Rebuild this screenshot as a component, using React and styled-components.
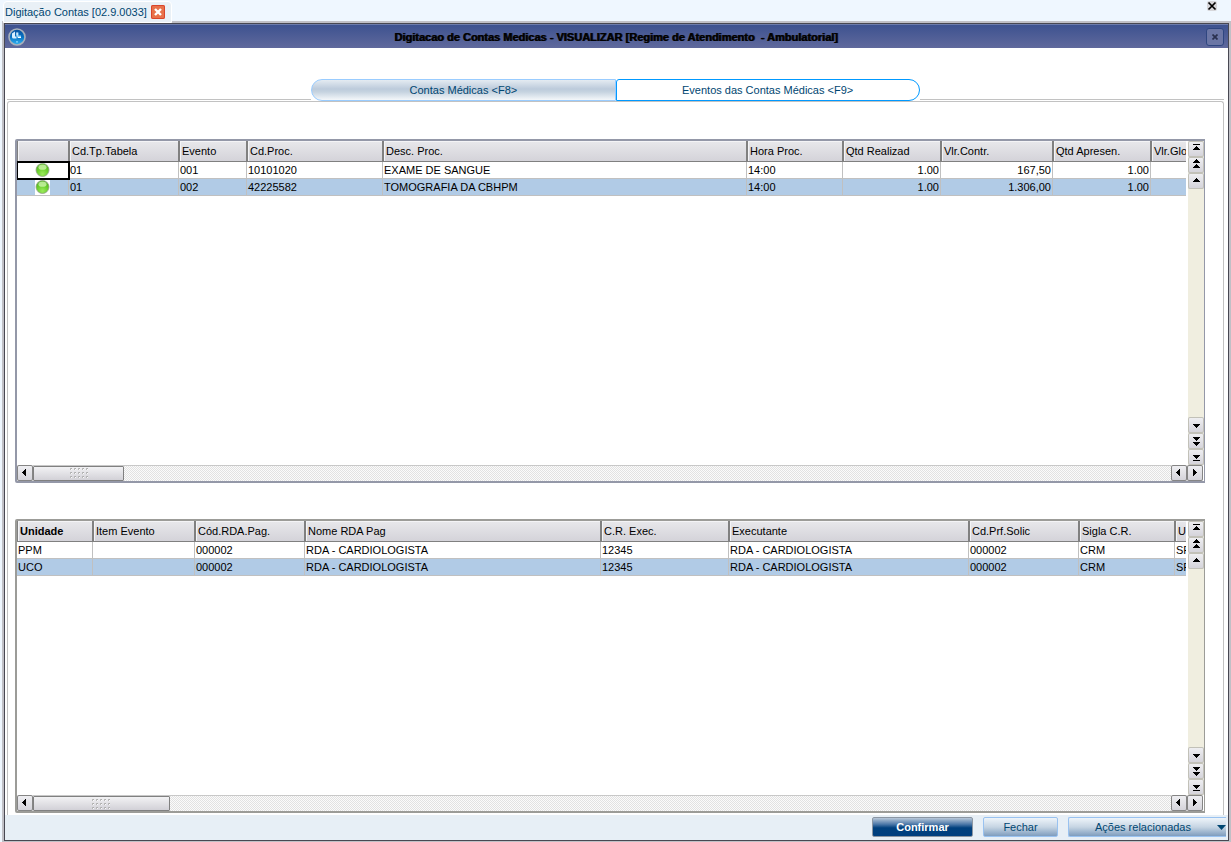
import React from "react";
import styled, { createGlobalStyle, css } from "styled-components";

const procedures = {
  label: "Eventos",
  columns: [
    { title: "", width: 52 },
    { title: "Cd.Tp.Tabela", width: 110 },
    { title: "Evento", width: 68 },
    { title: "Cd.Proc.", width: 136 },
    { title: "Desc. Proc.", width: 364 },
    { title: "Hora Proc.", width: 96 },
    { title: "Qtd Realizad", width: 98, numeric: true },
    { title: "Vlr.Contr.", width: 112, numeric: true },
    { title: "Qtd Apresen.", width: 98, numeric: true },
    { title: "Vlr.Glo", width: 52, numeric: true }
  ],
  rows: [
    ["status", "01", "001", "10101020", "EXAME DE SANGUE", "14:00", "1.00", "167,50", "1.00", ""],
    ["status", "01", "002", "42225582", "TOMOGRAFIA DA CBHPM", "14:00", "1.00", "1.306,00", "1.00", ""]
  ]
};

const units = {
  label: "Unidades",
  columns: [
    { title: "Unidade", width: 76, bold: true },
    { title: "Item Evento", width: 102 },
    { title: "Cód.RDA.Pag.", width: 110 },
    { title: "Nome RDA Pag", width: 296 },
    { title: "C.R. Exec.", width: 128 },
    { title: "Executante", width: 240 },
    { title: "Cd.Prf.Solic", width: 110 },
    { title: "Sigla C.R.", width: 96 },
    { title: "U", width: 40 }
  ],
  rows: [
    ["PPM", "", "000002", "RDA - CARDIOLOGISTA", "12345", "RDA - CARDIOLOGISTA", "000002", "CRM", "SP"],
    ["UCO", "", "000002", "RDA - CARDIOLOGISTA", "12345", "RDA - CARDIOLOGISTA", "000002", "CRM", "SP"]
  ]
};

const glyphs = {
  first: "M5 3h7v1h-7z M8 5h1v1h1v1h1v1h1v1h-7v-1h1v-1h1v-1h1z",
  pageUp: "M8 2h1v1h1v1h1v1h1v1h-7v-1h1v-1h1v-1h1z M8 7h1v1h1v1h1v1h1v1h-7v-1h1v-1h1v-1h1z",
  up: "M8 5h1v1h1v1h1v1h1v1h-7v-1h1v-1h1v-1h1z",
  down: "M5 7h7v1h-1v1h-1v1h-1v1h-1v-1h-1v-1h-1v-1h-1z",
  pageDown: "M5 4h7v1h-1v1h-1v1h-1v1h-1v-1h-1v-1h-1v-1h-1z M5 9h7v1h-1v1h-1v1h-1v1h-1v-1h-1v-1h-1v-1h-1z",
  last: "M5 6h7v1h-1v1h-1v1h-1v1h-1v-1h-1v-1h-1v-1h-1z M5 11h7v1h-7z",
  left: "M9 4v7h-1v-1h-1v-1h-1v-1h-1v-1h1v-1h1v-1h1v-1z",
  right: "M6 4v7h1v-1h1v-1h1v-1h1v-1h-1v-1h-1v-1h-1v-1z"
};

const ScrollButton = ({ glyph, label, horizontal }) => (
  <ArrowButton type="button" aria-label={label} $horizontal={horizontal}>
    <svg width="16" height="16" shapeRendering="crispEdges" aria-hidden="true">
      <path d={glyphs[glyph]} />
    </svg>
  </ArrowButton>
);

const StatusDot = () => (
  <Dot width="15" height="15" viewBox="0 0 15 15" role="img" aria-label="Ativo">
    <defs>
      <radialGradient id="dot" cx="50%" cy="80%" r="75%">
        <stop offset="0" stopColor="#9bea5c" />
        <stop offset="0.6" stopColor="#69cd2b" />
        <stop offset="1" stopColor="#4fb01c" />
      </radialGradient>
    </defs>
    <rect width="15" height="15" fill="#fff" />
    <circle cx="7.5" cy="7" r="6.5" fill="url(#dot)" stroke="#93a08c" strokeWidth="0.8" />
    <ellipse cx="7.5" cy="4.2" rx="4" ry="2.6" fill="#d4f7b4" opacity="0.75" />
  </Dot>
);

const DataGrid = ({ data, grow, thumb, focusFirst, tone }) => (
  <Frame $grow={grow} $tone={tone}>
    <Viewport>
      <Table aria-label={data.label}>
        <colgroup>
          {data.columns.map((column, i) => (
            <Column key={i} $width={column.width} />
          ))}
        </colgroup>
        <thead>
          <tr>
            {data.columns.map((column, i) => (
              <HeadCell key={i} scope="col" $bold={column.bold}>
                {column.title}
              </HeadCell>
            ))}
          </tr>
        </thead>
        <tbody>
          {data.rows.map((row, r) => (
            <Row key={r} $selected={r === 1}>
              {row.map((value, c) => (
                <Cell
                  key={c}
                  $numeric={data.columns[c].numeric}
                  $focused={focusFirst && r === 0 && c === 0}
                >
                  {value === "status" ? <StatusDot /> : value}
                </Cell>
              ))}
            </Row>
          ))}
        </tbody>
      </Table>
    </Viewport>
    <VerticalBar>
      <ScrollButton glyph="first" label="Primeiro" />
      <ScrollButton glyph="pageUp" label="Página acima" />
      <ScrollButton glyph="up" label="Acima" />
      <Spacer />
      <ScrollButton glyph="down" label="Abaixo" />
      <ScrollButton glyph="pageDown" label="Página abaixo" />
      <ScrollButton glyph="last" label="Último" />
    </VerticalBar>
    <HorizontalBar>
      <ScrollButton glyph="left" label="Esquerda" horizontal />
      <Track>
        <Thumb $size={thumb}>
          <Grip width="18" height="10" shapeRendering="crispEdges" aria-hidden="true">
            {[0, 4, 8].map(y =>
              [0, 4, 8, 12, 16].map(x => (
                <g key={`${x}-${y}`}>
                  <rect x={x} y={y} width="2" height="2" fill="#fff" />
                  <rect x={x} y={y} width="2" height="1" fill="#a8a8a8" />
                  <rect x={x} y={y} width="1" height="2" fill="#b4b4b4" />
                </g>
              ))
            )}
          </Grip>
        </Thumb>
      </Track>
      <ScrollButton glyph="left" label="Rolar à esquerda" horizontal />
      <ScrollButton glyph="right" label="Rolar à direita" horizontal />
    </HorizontalBar>
  </Frame>
);

const AppLogo = () => (
  <svg width="18" height="18" viewBox="0 0 18 18" aria-hidden="true">
    <defs>
      <linearGradient id="logo" x1="0" y1="0" x2="0" y2="1">
        <stop offset="0" stopColor="#0a4f9c" />
        <stop offset="0.5" stopColor="#0873c4" />
        <stop offset="1" stopColor="#35b5f2" />
      </linearGradient>
    </defs>
    <circle cx="9" cy="9" r="8" fill="url(#logo)" stroke="#a9b1bb" strokeWidth="1.6" />
    <path d="M4 5.500l3-2v5h1.500v2h-3a1.500 1.500 0 0 1-1.500-1.500z" fill="#d8efff" />
    <path d="M8.500 4.500h2v3h2.500v2.500h-3l-1.500-1.500z" fill="#8fd0f8" />
    <path d="M8.500 4.500h1v3h-1z M10 9h3v1h-3z" fill="#fff" />
    <circle cx="9" cy="13.800" r="0.900" fill="#8fdcff" />
  </svg>
);

const App = () => (
  <Page>
    <GlobalStyle />
    <TopBar>
      <DocumentTab>
        Digitação Contas [02.9.0033]
        <CloseTab type="button" aria-label="Fechar aba">
          <svg width="14" height="14" viewBox="0 0 14 14" aria-hidden="true">
            <path d="M4 4l6 6M10 4l-6 6" stroke="#fff" strokeWidth="2.4" />
          </svg>
        </CloseTab>
      </DocumentTab>
      <ClosePage type="button" aria-label="Fechar">
        <svg width="10" height="10" viewBox="0 0 10 10" aria-hidden="true">
          <path d="M1.5 1.5l7 7M8.5 1.5l-7 7" stroke="#000" strokeWidth="1.7" />
        </svg>
      </ClosePage>
    </TopBar>
    <Window>
      <TitleBar>
        <AppLogo />
        <Title>
          Digitacao de Contas Medicas - VISUALIZAR [Regime de Atendimento&nbsp; - Ambulatorial]
        </Title>
        <CloseWindow type="button" aria-label="Fechar janela">
          <svg width="6" height="6" viewBox="0 0 6 6" aria-hidden="true">
            <path d="M0.5 0.5l5 5M5.5 0.5l-5 5" stroke="#2a304f" strokeWidth="1.7" />
          </svg>
        </CloseWindow>
      </TitleBar>
      <Body>
        <Tabs role="tablist">
          <Rule />
          <Tab type="button" role="tab" aria-selected="false">
            Contas Médicas &lt;F8&gt;
          </Tab>
          <Tab type="button" role="tab" aria-selected="true" $active>
            Eventos das Contas Médicas &lt;F9&gt;
          </Tab>
          <Rule />
        </Tabs>
        <Panel role="tabpanel">
          <DataGrid data={procedures} grow={172} thumb={8} tone="#9498a8" focusFirst />
          <DataGrid data={units} grow={147} thumb={12} tone="#9c9c98" />
        </Panel>
      </Body>
      <Footer>
        <Action type="button" $primary $width={101}>
          Confirmar
        </Action>
        <Action type="button" $width={75}>
          Fechar
        </Action>
        <Action type="button" $width={158} $menu>
          <span>Ações relacionadas</span>
          <svg width="9" height="5" aria-hidden="true">
            <path d="M0 0h9l-4.500 5z" fill="#004671" />
          </svg>
        </Action>
      </Footer>
    </Window>
  </Page>
);

export default App;

const GlobalStyle = createGlobalStyle`
  * {
    box-sizing: border-box;
  }

  body {
    margin: 0;
    background: #eff7ff;
    color: #000;
    font: 11px/14px "Liberation Sans", Arial, sans-serif;
  }

  button {
    margin: 0;
    padding: 0;
    border: 0;
    font: inherit;
    color: inherit;
  }

  svg {
    display: block;
    flex: none;
  }
`;

const Page = styled.div`
  display: flex;
  flex-direction: column;
  height: 100vh;
  min-height: 480px;
  overflow: hidden;
`;

const TopBar = styled.header`
  display: flex;
  justify-content: space-between;
  align-items: flex-start;
  height: 21px;
  padding: 1px 14px 0 3px;
`;

const DocumentTab = styled.div`
  position: relative;
  z-index: 1;
  display: flex;
  align-items: center;
  gap: 4px;
  height: 22px;
  padding: 0 6px 0 1px;
  border: 1px solid #fff;
  border-radius: 4px 4px 0 0;
  background: #e9f0f6;
  color: #004671;
`;

const CloseTab = styled.button`
  width: 14px;
  height: 14px;
  border-radius: 2px;
  background: #e8714a;
  box-shadow: inset 0 0 0 1px #d9452c;
`;

const ClosePage = styled.button`
  border-radius: 2px;
  background: #d6d6da;
`;

const Window = styled.main`
  display: flex;
  flex: 1;
  flex-direction: column;
  min-height: 0;
  margin-left: 2px;
  border: solid #c0c0c6;
  border-width: 2px 2px 1px;
  background: #fff;
  box-shadow: inset 0 0 0 1px #484852;
  padding: 1px;
`;

const TitleBar = styled.div`
  display: flex;
  align-items: center;
  height: 24px;
  padding: 0 4px 0 3px;
  border-top: 1px solid #6d7cab;
  background: linear-gradient(#3d5290, #60699c);
`;

const Title = styled.h1`
  flex: 1;
  margin: 0;
  font-size: 11px;
  font-weight: bold;
  text-align: center;
  text-shadow: 1px 0 #15151c;
`;

const CloseWindow = styled.button`
  display: grid;
  place-items: center;
  width: 18px;
  height: 18px;
  border: 1px solid #2f4680;
  border-radius: 3px;
  background: #6b76a5;
`;

const Body = styled.div`
  display: flex;
  flex: 1;
  flex-direction: column;
  min-height: 0;
  padding: 31px 4px 0 2px;
`;

const Tabs = styled.div`
  display: grid;
  grid-template-columns: repeat(4, 1fr);
  align-items: end;
`;

const Rule = styled.div`
  height: 2px;
  border-top: 1px solid #c2c2c2;
`;

const Tab = styled.button`
  height: 22px;
  border: 1px solid #99ccff;
  border-radius: 11px 0 0 11px;
  background: linear-gradient(#e4ebf2, #bccbdb 45%, #c6d3e0 60%, #f4f7fa);
  color: #004671;

  ${({ $active }) =>
    $active &&
    css`
      border-color: #0099ff;
      border-radius: 3px 11px 11px 0;
      background: #fff;
    `}
`;

const Panel = styled.section`
  display: flex;
  flex: 1;
  flex-direction: column;
  gap: 36px;
  min-height: 0;
  padding: 37px 18px 2px 7px;
  border: solid #c2c2c2;
  border-width: 1px 1px 0;
  border-radius: 3px 3px 0 0;
`;

const Frame = styled.div`
  display: grid;
  grid-template-columns: minmax(0, 1fr) 16px;
  grid-template-rows: minmax(0, 1fr) 16px;
  flex: ${({ $grow }) => $grow} 1 0;
  min-height: 0;
  border: 2px solid ${({ $tone }) => $tone};
  border-right-width: 1px;
  border-radius: 2px 0 0 2px;
`;

const Viewport = styled.div`
  overflow: hidden;
  margin-right: 2px;
`;

const Table = styled.table`
  width: max-content;
  table-layout: fixed;
  border-collapse: separate;
  border-spacing: 0;
`;

const Column = styled.col`
  width: ${({ $width }) => $width}px;
`;

const HeadCell = styled.th`
  height: 21px;
  padding: 0 0 0 3px;
  border: solid #808080;
  border-width: 0 1px 1px 0;
  box-shadow: inset 1px 0 #808080, inset 2px 1px #f4f4f6;
  background: linear-gradient(#e8e8eb, #d4d3d9);
  font-weight: ${({ $bold }) => ($bold ? "bold" : "normal")};
  text-align: left;
  white-space: nowrap;
`;

const Row = styled.tr`
  background: ${({ $selected }) => ($selected ? "#b1cbe6" : "#fff")};
`;

const Cell = styled.td`
  height: 17px;
  padding: 0 1px;
  border: solid #c0c0c0;
  border-width: 0 1px 1px 0;
  text-align: ${({ $numeric }) => ($numeric ? "right" : "left")};
  white-space: nowrap;

  ${({ $focused }) =>
    $focused &&
    css`
      outline: 2px solid #000;
      outline-offset: -1px;
    `}
`;

const Dot = styled.svg`
  margin: 0 auto;
`;

const VerticalBar = styled.div`
  display: flex;
  flex-direction: column;
  min-height: 0;
  background: #f0eee0;
`;

const Spacer = styled.div`
  flex: 1;
`;

const HorizontalBar = styled.div`
  display: flex;
  grid-column: 1 / -1;
  padding-right: 1px;
`;

const ArrowButton = styled.button`
  flex: none;
  width: 16px;
  height: 16px;
  border-radius: 2px;
  background: linear-gradient(#f0f0f3, #d3d2d9);
  box-shadow: inset 0 0 0 1px ${({ $horizontal }) => ($horizontal ? "#858585" : "#c2c1b8")};
`;

const Track = styled.div`
  flex: 1;
  border-top: 1px solid #c8c8c8;
  background: repeating-conic-gradient(#e2e2e2 0 25%, #fbfbfb 0 50%) 0 0 / 2px 2px;
`;

const Thumb = styled.div`
  display: grid;
  place-items: center;
  width: ${({ $size }) => $size}%;
  height: 15px;
  border: 1px solid #808080;
  border-radius: 1px;
  background: linear-gradient(#f2f2f4, #d2d1d7);
`;

const Grip = styled.svg`
  opacity: 0.9;
`;

const Footer = styled.footer`
  display: flex;
  justify-content: flex-end;
  gap: 10px;
  padding: 2px 2px 3px;
  background: #e7eff6;
`;

const Action = styled.button`
  display: flex;
  align-items: center;
  justify-content: center;
  width: ${({ $width }) => $width}px;
  height: 20px;
  border: 1px solid #99c2f0;
  border-radius: 2px;
  background: linear-gradient(#eef4fa, #c6d5e3 50%, #7f9dbe);
  color: #004671;

  ${({ $primary }) =>
    $primary &&
    css`
      border-color: #8b96a3;
      background: linear-gradient(#b9c8d9, #4c78a8 35%, #00407d 55%, #003f7f);
      color: #fff;
      font-weight: bold;
    `}

  ${({ $menu }) =>
    $menu &&
    css`
      border-right: 0;
      border-radius: 2px 0 0 2px;

      span {
        flex: 1;
      }
    `}
`;
